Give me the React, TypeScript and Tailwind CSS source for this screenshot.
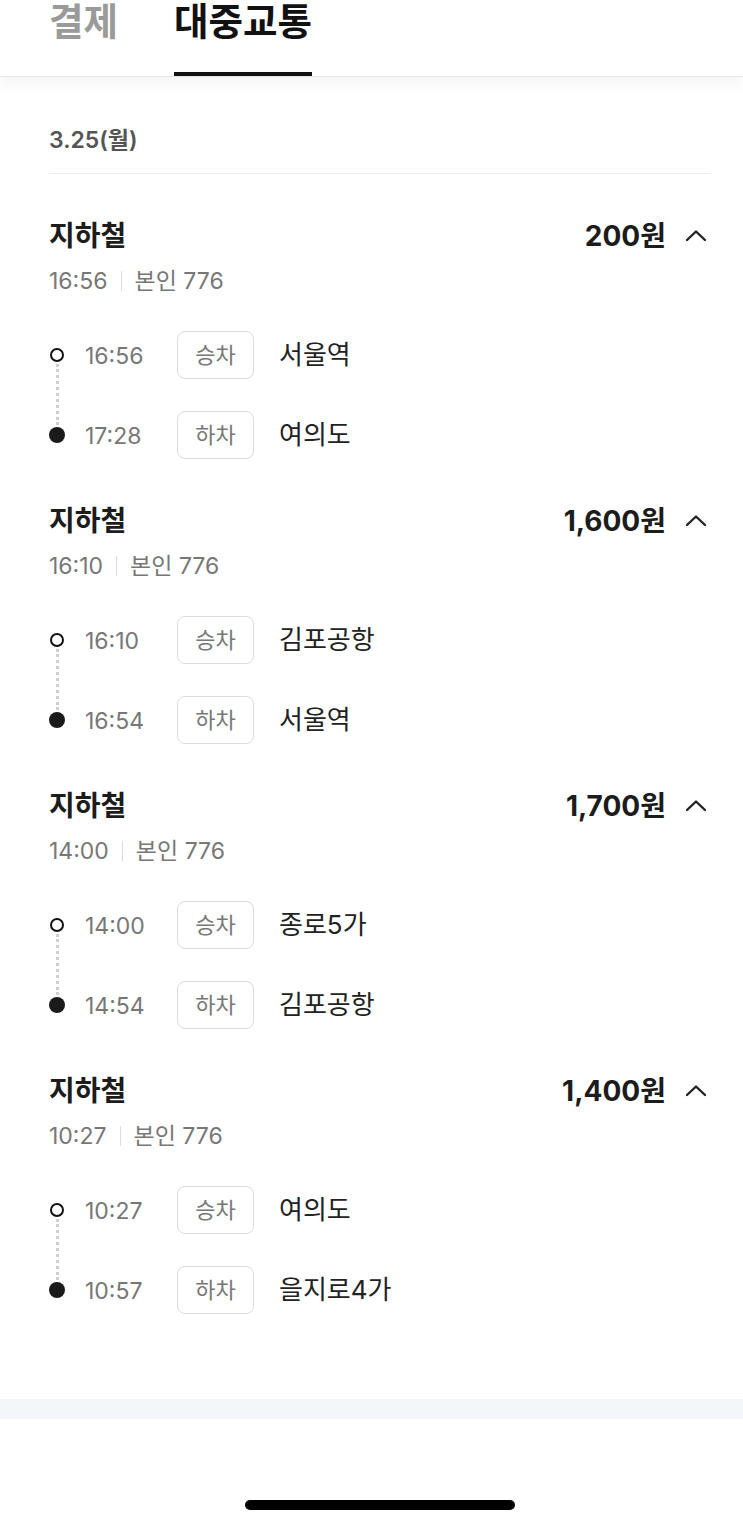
import React from "react";

type Trip = {
  time: string;
  price: string;
  from: { time: string; station: string };
  to: { time: string; station: string };
};

const trips: Trip[] = [
  { time: "16:56", price: "200원", from: { time: "16:56", station: "서울역" }, to: { time: "17:28", station: "여의도" } },
  { time: "16:10", price: "1,600원", from: { time: "16:10", station: "김포공항" }, to: { time: "16:54", station: "서울역" } },
  { time: "14:00", price: "1,700원", from: { time: "14:00", station: "종로5가" }, to: { time: "14:54", station: "김포공항" } },
  { time: "10:27", price: "1,400원", from: { time: "10:27", station: "여의도" }, to: { time: "10:57", station: "을지로4가" } },
];

const font = { fontFamily: 'Inter, "Noto Sans CJK KR", "Noto Sans", sans-serif' };

function Stop({ time, label, station }: { time: string; label: string; station: string }) {
  return (
    <div className="flex h-[48px] items-center">
      <span className="w-[92px] pt-[2px] text-[23px] leading-none text-[#777]">{time}</span>
      <span className="flex h-[48px] w-[77px] items-center justify-center rounded-[8px] border border-[#dcdcdc] text-[22px] text-[#777]">
        {label}
      </span>
      <span className="ml-[25px] text-[26px] leading-none text-[#222]">{station}</span>
    </div>
  );
}

function TripItem({ trip }: { trip: Trip }) {
  return (
    <div className="pt-[46px]">
      <div className="flex h-[32px] items-center justify-between pr-[3px]">
        <span className="text-[28px] font-bold text-[#1c1c1c]">지하철</span>
        <div className="flex items-center gap-[18px]">
          <span className="text-[28px] font-bold text-[#1c1c1c]">{trip.price}</span>
          <svg width="24" height="24" viewBox="0 0 24 24" fill="none">
            <polyline points="3,16 12,7.5 21,16" stroke="#222" strokeWidth="2.4" strokeLinecap="round" strokeLinejoin="round" />
          </svg>
        </div>
      </div>
      <div className="mt-[15px] flex h-[28px] items-center text-[23px] text-[#777]">
        <span>{trip.time}</span>
        <span className="mx-[13px] h-[20px] w-px bg-[#dcdcdc]" />
        <span>본인 776</span>
      </div>
      <div className="mt-[36px] flex">
        <div className="flex w-[16px] flex-col items-center pt-[17px] pb-[16px]">
          <div className="h-[14px] w-[14px] rounded-full border-2 border-[#111] bg-white" />
          <div className="my-[2px] flex-1 border-l-[3px] border-dotted border-[#cfcfcf]" />
          <div className="h-[16px] w-[16px] rounded-full bg-[#1a1a1a]" />
        </div>
        <div className="ml-[20px] flex flex-col gap-[32px]">
          <Stop time={trip.from.time} label="승차" station={trip.from.station} />
          <Stop time={trip.to.time} label="하차" station={trip.to.station} />
        </div>
      </div>
    </div>
  );
}

export default function App() {
  return (
    <div className="relative flex h-[1527px] w-[743px] flex-col overflow-hidden bg-white" style={font}>
      <header className="relative z-10 flex h-[77px] shrink-0 gap-[56px] border-b border-[#e6e6e6] bg-white pl-[49px] shadow-[0_6px_14px_rgba(0,0,0,0.05)]">
        <div className="flex flex-col">
          <div className="mt-[2px] h-[40px] text-[37.5px] font-bold leading-[40px] text-[#9a9a9a]">결제</div>
        </div>
        <div className="flex flex-col">
          <div className="mt-[2px] h-[40px] text-[37.5px] font-bold leading-[40px] text-[#111]">대중교통</div>
          <div className="mt-auto h-[4px] w-full bg-[#111]" />
        </div>
      </header>

      <main className="pl-[49px] pr-[32px]">
        <div className="pt-[49px] pb-[19px] text-[23px] font-semibold leading-[28px] text-[#555]">3.25(월)</div>
        <div className="h-px bg-[#ececec]" />
        {trips.map((t, i) => (
          <TripItem key={i} trip={t} />
        ))}
      </main>

      <div className="mt-[85px] h-[20px] shrink-0 bg-[#f5f6f9]" />

      <div className="flex flex-1 items-end pb-[17px]">
        <div className="ml-[245px] h-[10px] w-[270px] rounded-full bg-black" />
      </div>
    </div>
  );
}
